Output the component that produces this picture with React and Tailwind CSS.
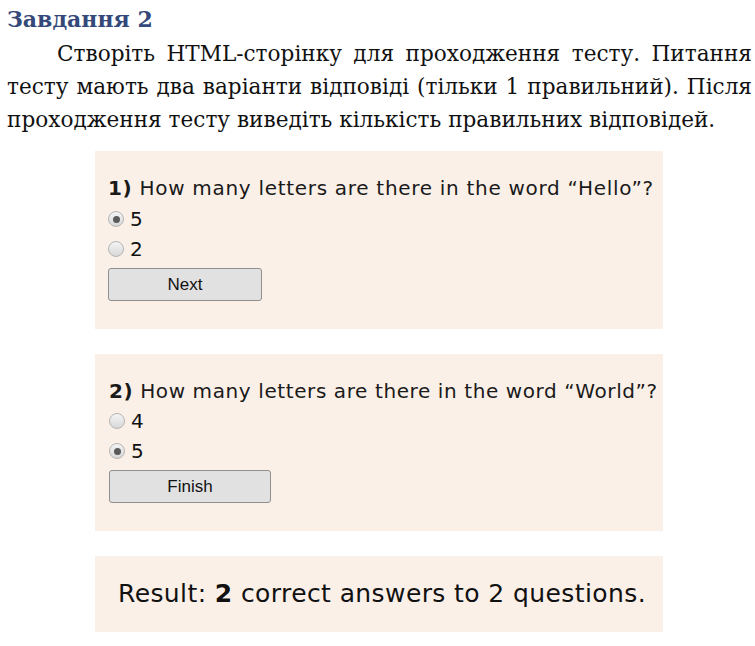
import React from "react";

function Radio({ checked }) {
  return (
    <span className="relative inline-flex h-[16px] w-[16px] shrink-0 items-center justify-center rounded-full border border-[#b4b4b4] bg-gradient-to-b from-[#f4f4f4] to-[#d8d8d8]">
      {checked && <span className="h-[7px] w-[7px] rounded-full bg-[#5a5a5a]" />}
    </span>
  );
}

function Option({ label, checked }) {
  return (
    <div className="flex h-[30px] items-center gap-[6px]">
      <Radio checked={checked} />
      <span className="text-[20px] leading-none text-[#111]">{label}</span>
    </div>
  );
}

function Button({ children, w }) {
  return (
    <div
      className="flex h-[33px] items-center justify-center rounded-[3px] border border-[#8f8f8f] bg-[#e1e1e1] text-[17px] text-[#111]"
      style={{ width: w, fontFamily: '"Liberation Sans", Arial, sans-serif' }}
    >
      {children}
    </div>
  );
}

export default function App() {
  return (
    <div className="h-[646px] w-[755px] overflow-hidden bg-white">
      <div className="pl-[7px] pr-[3px] pt-[4px]" style={{ fontFamily: '"DejaVu Serif", "Liberation Serif", serif' }}>
        <div className="text-[22px] font-bold leading-[30px] text-[#34487a]">Завдання 2</div>
        <div className="mt-[3px] text-[21.6px] leading-[33px] text-[#111]">
          <p className="pl-[50px] text-justify [text-align-last:justify]">
            Створіть HTML-сторінку для проходження тесту. Питання
          </p>
          <p className="text-justify [text-align-last:justify]">
            тесту мають два варіанти відповіді (тільки 1 правильний). Після
          </p>
          <p>проходження тесту виведіть кількість правильних відповідей.</p>
        </div>
      </div>
      <div style={{ fontFamily: '"DejaVu Sans", Verdana, sans-serif' }}>
        <div className="mt-[15px]">
          <div className="ml-[95px] h-[178px] w-[568px] bg-[#faf0e8] pl-[13px] pt-[24px]">
            <div className="text-[20px] leading-[26px] tracking-[0.7px] text-[#1a1a1a]">
              <b className="font-bold">1)</b> How many letters are there in the word “Hello”?
            </div>
            <div className="mt-[3px]">
              <Option label="5" checked />
              <Option label="2" />
            </div>
            <div className="mt-[4px]">
              <Button w="154px">Next</Button>
            </div>
          </div>
        </div>
        <div className="mt-[25px]">
          <div className="ml-[95px] h-[177px] w-[568px] bg-[#faf0e8] pl-[14px] pt-[24px]">
            <div className="text-[20px] leading-[26px] tracking-[0.6px] text-[#1a1a1a]">
              <b className="font-bold">2)</b> How many letters are there in the word “World”?
            </div>
            <div className="mt-[2px]">
              <Option label="4" />
              <Option label="5" checked />
            </div>
            <div className="mt-[4px]">
              <Button w="162px">Finish</Button>
            </div>
          </div>
        </div>
        <div className="mt-[25px]">
          <div className="ml-[95px] flex h-[76px] w-[568px] items-center bg-[#faf0e8] pl-[23px] text-[25px] tracking-[0.4px] text-[#111]">
            <span>
              Result: <b className="font-bold">2</b> correct answers to 2 questions.
            </span>
          </div>
        </div>
      </div>
    </div>
  );
}
